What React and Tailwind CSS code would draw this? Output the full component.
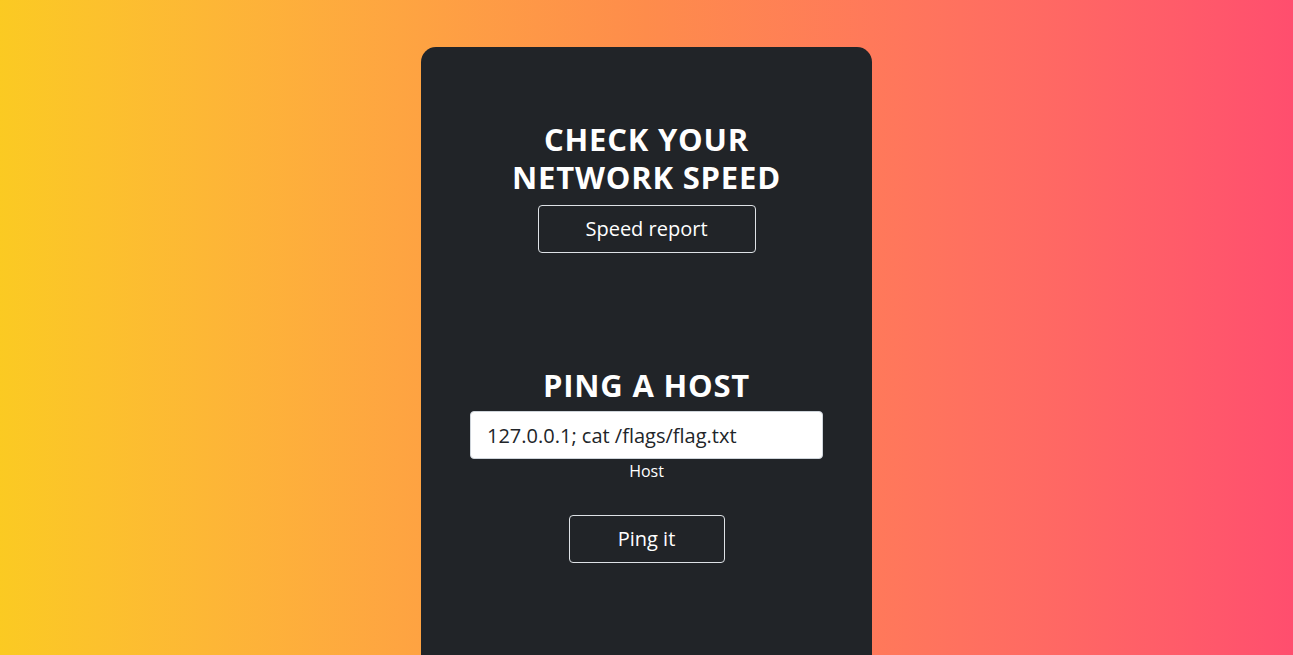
import React, { useState } from 'react';

const App = () => {
  const [host, setHost] = useState('127.0.0.1; cat /flags/flag.txt');

  return (
    <main
      className="min-h-screen w-full flex justify-center bg-gradient-to-r from-[#fbca22] via-[#fe8c4b] to-[#ff4e6e]"
      style={{ fontFamily: '"Open Sans", "Noto Sans", sans-serif' }}
    >
      <section className="w-[451px] mt-[47px] min-h-[640px] bg-[#212428] rounded-t-[15px] text-white flex flex-col items-center pt-[73px]">
        <h1 className="text-[31px] leading-[38px] font-bold text-center tracking-[0.8px]">
          CHECK YOUR
          <br />
          NETWORK SPEED
        </h1>
        <button className="mt-[9px] w-[218px] h-[48px] border border-[#dee2e6] rounded-[4px] text-[20px] text-white">
          Speed report
        </button>

        <h2 className="mt-[113px] text-[31px] leading-[38px] font-bold text-center tracking-[0.8px]">PING A HOST</h2>
        <input
          type="text"
          autoFocus
          value={host}
          onChange={(e) => setHost(e.target.value)}
          onFocus={(e) => e.target.setSelectionRange(host.length, host.length)}
          className="mt-[7px] w-[353px] h-[48px] bg-white text-[#212529] rounded-[4px] border border-[#ced4da] px-[16px] text-[20px] outline-none caret-[#212529]"
        />
        <label className="text-[16px] leading-[24px] text-white">Host</label>
        <button className="mt-[32px] w-[156px] h-[48px] border border-[#dee2e6] rounded-[4px] text-[20px] text-white">
          Ping it
        </button>
      </section>
    </main>
  );
};

export default App;
